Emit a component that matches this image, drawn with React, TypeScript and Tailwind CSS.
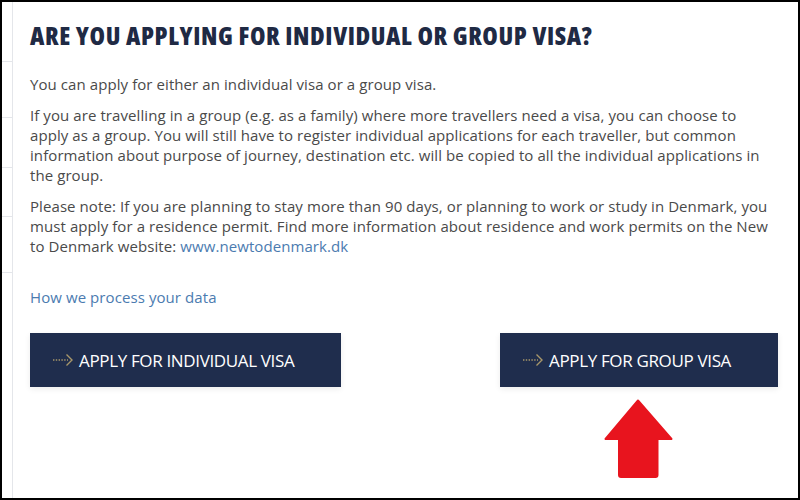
import { useState } from 'react';

const sideRows = [60, 56, 50, 49, 56];

const ArrowMark = () => (
  <svg width="21" height="14" viewBox="0 0 21 14" fill="none" className="shrink-0">
    <path d="M1 7h15" stroke="#a8976a" strokeWidth="1.3" strokeDasharray="1.4 1.4" />
    <path d="M14.5 1.5 20 7l-5.5 5.5" stroke="#a8976a" strokeWidth="1.4" />
  </svg>
);

const ApplyButton = ({ label }: { label: string }) => (
  <button className="flex h-[54px] items-center gap-[6px] bg-[#1f2d4d] pl-[22px] pr-[47px] text-[17px] font-medium leading-none text-white shadow-[0_2px_6px_rgba(0,0,0,0.08)] [font-family:'Open_Sans',sans-serif]">
    <ArrowMark />
    <span className="tracking-[-0.35px]">{label}</span>
  </button>
);

export default function App() {
  const [chosen, setChosen] = useState<string | null>(null);

  return (
    <div className="box-border flex h-[500px] w-[800px] overflow-hidden border-2 border-black bg-white [font-family:'Open_Sans',sans-serif]">
      <div className="flex w-[11px] shrink-0 flex-col border-r border-[#e4e6ea]">
        {sideRows.map((h, i) => (
          <div key={i} className="border-b border-[#e4e6ea]" style={{ height: h }} />
        ))}
      </div>
      <div className="flex flex-1 flex-col pl-[17px] pr-[20px] pt-[18px]">
        <h2 className="font-stretch-semi-condensed text-[25px] font-extrabold leading-[30px] tracking-[0.6px] text-[#1f2a44]">
          ARE YOU APPLYING FOR INDIVIDUAL OR GROUP VISA?
        </h2>
        <div className="mt-[24px] flex flex-col gap-[11px] pr-[8px] text-[15px] leading-[20px] tracking-[0.08px] text-[#4a4a4a]">
          <p>You can apply for either an individual visa or a group visa.</p>
          <p>
            If you are travelling in a group (e.g. as a family) where more travellers need a visa, you can choose to
            apply as a group. You will still have to register individual applications for each traveller, but common
            information about purpose of journey, destination etc. will be copied to all the individual applications in
            the group.
          </p>
          <p>
            Please note: If you are planning to stay more than 90 days, or planning to work or study in Denmark, you
            must apply for a residence permit. Find more information about residence and work permits on the New to
            Denmark website: <a className="text-[#4b7bb0]">www.newtodenmark.dk</a>
          </p>
        </div>
        <a className="mt-[31px] text-[15px] leading-[20px] tracking-[0.08px] text-[#4b7bb0]">How we process your data</a>
        <div className="mt-[26px] flex items-start justify-between">
          <div onClick={() => setChosen('individual')}>
            <ApplyButton label="APPLY FOR INDIVIDUAL VISA" />
          </div>
          <div className="flex flex-col items-center" onClick={() => setChosen('group')}>
            <ApplyButton label="APPLY FOR GROUP VISA" />
            <svg width="70" height="80" viewBox="0 0 70 80" className="mt-[12px]">
              <path
                d="M34 1.5 67.5 40 H53.5 V76 Q53.5 78 51.5 78 H17 Q15 78 15 76 V40 H1.5 Z"
                fill="#e8141e"
                stroke="#e8141e"
                strokeLinejoin="round"
                strokeWidth="2"
              />
            </svg>
          </div>
        </div>
        {chosen && <span className="sr-only">{chosen}</span>}
      </div>
    </div>
  );
}
